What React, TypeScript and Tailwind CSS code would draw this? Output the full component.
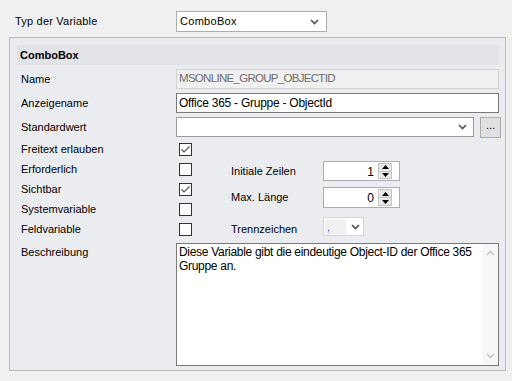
const Chevron = ({ className = "" }: { className?: string }) => (
  <svg width="9" height="6" viewBox="0 0 9 6" className={className}>
    <path d="M1 1 L4.5 4.5 L8 1" fill="none" stroke="currentColor" strokeWidth="1.7" />
  </svg>
);

const Check = ({ checked }: { checked?: boolean }) => (
  <div className="w-[13px] h-[13px] border border-[#333] bg-white flex items-center justify-center">
    {checked && (
      <svg width="11" height="11" viewBox="0 0 11 11">
        <path d="M1.5 5.5 L4 8 L9.5 2.5" fill="none" stroke="#555" strokeWidth="1.2" />
      </svg>
    )}
  </div>
);

const Spinner = ({ value }: { value: string }) => (
  <div className="w-[77px] h-full bg-white border border-[#adadad] flex items-stretch py-[1px] pr-[7px]">
    <div className="flex-1 text-right pr-[4px] text-[12px] leading-[18px]">{value}</div>
    <div className="w-[14px] flex flex-col border border-[#c4c4c4]">
      <div className="flex-1 bg-[#e8e8e8] border-b border-[#c4c4c4] flex items-center justify-center">
        <svg width="7" height="4" viewBox="0 0 7 4">
          <path d="M0 4 L3.5 0 L7 4 Z" fill="#000" />
        </svg>
      </div>
      <div className="flex-1 bg-[#e8e8e8] flex items-center justify-center">
        <svg width="7" height="4" viewBox="0 0 7 4">
          <path d="M0 0 L3.5 4 L7 0 Z" fill="#000" />
        </svg>
      </div>
    </div>
  </div>
);

const Row = ({ label, children }: { label: string; children: React.ReactNode }) => (
  <div className="flex items-center h-[20px] mt-[4px]">
    <div className="w-[159px] pl-[4px]">{label}</div>
    {children}
  </div>
);

export default function App() {
  const checks: [string, boolean][] = [
    ["Freitext erlauben", true],
    ["Erforderlich", false],
    ["Sichtbar", true],
    ["Systemvariable", false],
    ["Feldvariable", false],
  ];

  return (
    <div className="w-[512px] h-[381px] overflow-hidden bg-[#f0f0f0] text-[11px] text-black font-['Liberation_Sans',Arial,sans-serif]">
      <div className="flex items-center h-[21px] mt-[11px]">
        <div className="w-[176px] pl-[15px] tracking-[0.2px]">Typ der Variable</div>
        <div className="w-[151px] h-[21px] bg-white border border-[#adadad] flex items-center justify-between pl-[3px] pr-[7px] tracking-[0.3px]">
          ComboBox
          <Chevron className="text-[#555]" />
        </div>
      </div>

      <div className="mt-[5px] ml-[9px] w-[497px] h-[334px] border border-[#bcbcbc] bg-[#ebecef] pt-[7px] pl-[7px]">
        <div className="w-[482px] h-[20px] bg-[#e2e3e7] flex items-center pl-[3px] font-bold">ComboBox</div>

        <Row label="Name">
          <div className="w-[323px] h-[20px] bg-[#f0f0f0] border border-[#d2d2d2] flex items-center pl-[2px] text-[11.5px] text-[#6d6d6d] tracking-[-0.7px]">
            MSONLINE_GROUP_OBJECTID
          </div>
        </Row>
        <Row label="Anzeigename">
          <div className="w-[323px] h-[20px] bg-white border border-[#7a7a7a] flex items-center pl-[2px] text-[12px] tracking-[-0.25px]">
            Office 365 - Gruppe - ObjectId
          </div>
        </Row>
        <Row label="Standardwert">
          <div className="w-[298px] h-[20px] bg-white border border-[#9a9a9a] flex items-center justify-end pr-[6px]">
            <Chevron className="text-[#555]" />
          </div>
          <div className="ml-[6px] w-[21px] h-[21px] bg-[#e1e1e1] border border-[#adadad] flex items-center justify-center text-[11px] leading-none pb-[3px]">
            ...
          </div>
        </Row>

        <div className="flex mt-[2px]">
          <div className="flex flex-col">
            {checks.map(([label, checked]) => (
              <div key={label} className="flex items-center h-[20px]">
                <div className="w-[162px] pl-[4px]">{label}</div>
                <Check checked={checked} />
              </div>
            ))}
          </div>
          <div className="ml-[39px] mt-[22px] flex flex-col">
            <div className="flex items-center h-[20px]">
              <div className="w-[92px]">Initiale Zeilen</div>
              <Spinner value="1" />
            </div>
            <div className="flex items-center h-[21px] mt-[6px]">
              <div className="w-[92px]">Max. Länge</div>
              <Spinner value="0" />
            </div>
            <div className="flex items-center h-[19px] mt-[9px]">
              <div className="w-[92px] mt-[6px]">Trennzeichen</div>
              <div className="w-[41px] h-full bg-white border border-[#d4d4d4] flex">
                <div className="w-[23px] h-full bg-[#f0f0f0] border border-white flex items-end pl-[2px] text-[#3a5fcd] leading-none pb-[1px]">,</div>
                <div className="flex-1 flex items-center justify-center">
                  <Chevron className="text-[#555]" />
                </div>
              </div>
            </div>
          </div>
        </div>

        <div className="flex mt-[4px]">
          <div className="w-[159px] pl-[4px] pt-[1px]">Beschreibung</div>
          <div className="w-[323px] h-[123px] bg-white border border-[#7a7a7a] flex">
            <div className="flex-1 pl-[2px] pt-[1px] text-[12px] leading-[14px] tracking-[-0.3px]">
              Diese Variable gibt die eindeutige Object-ID der Office 365 Gruppe an.
            </div>
            <div className="w-[16px] bg-[#f7f7f7] flex flex-col items-center justify-between py-[6px]">
              <Chevron className="text-[#c8c8c8] rotate-180" />
              <Chevron className="text-[#c8c8c8]" />
            </div>
          </div>
        </div>
      </div>
    </div>
  );
}
